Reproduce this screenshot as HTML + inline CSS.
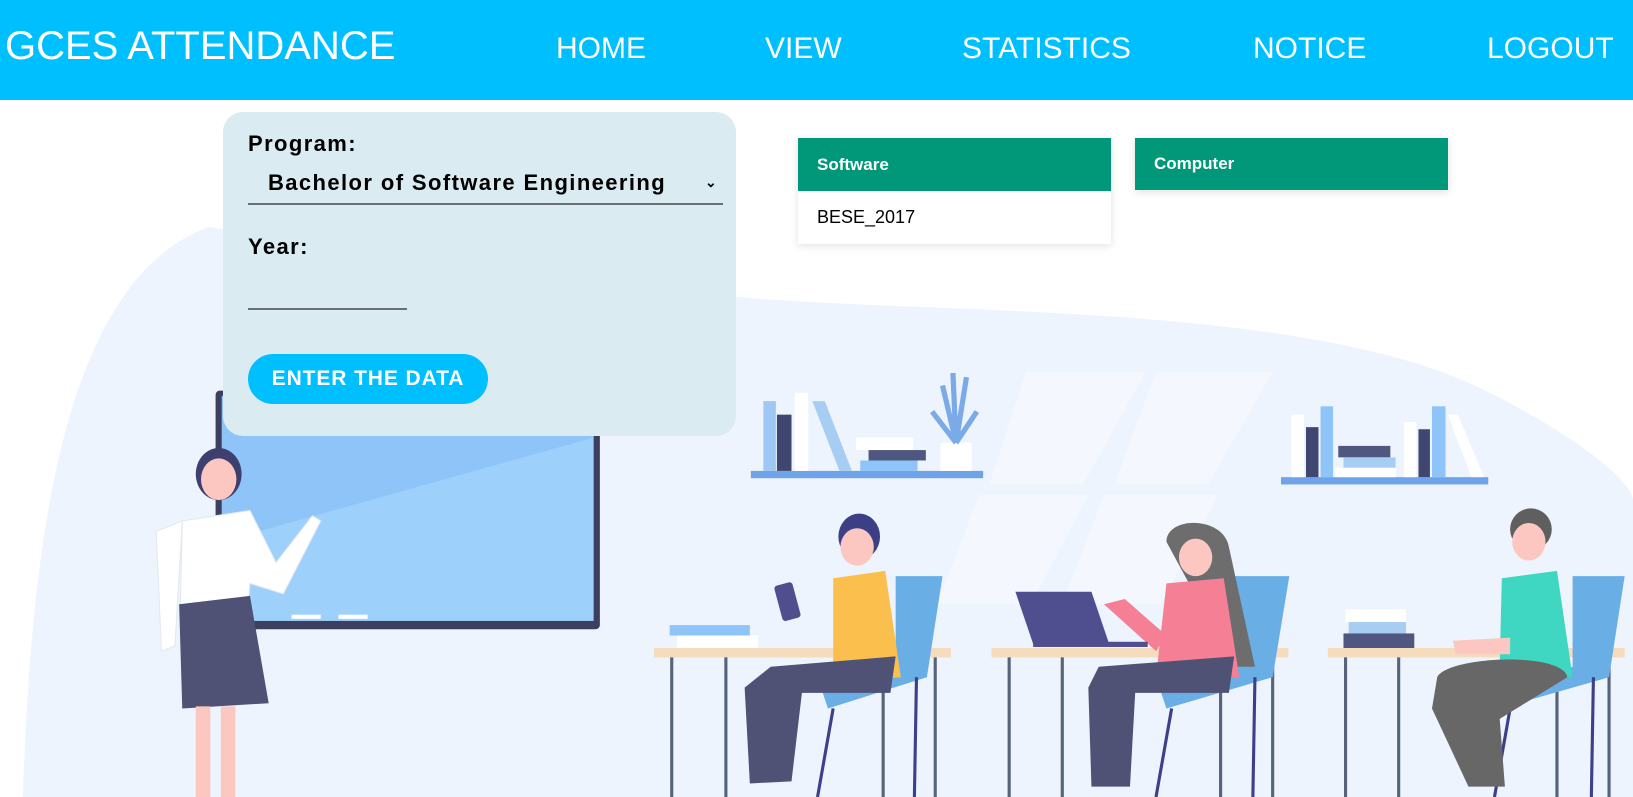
<!DOCTYPE html>
<html><head><meta charset="utf-8"><style>
*{margin:0;padding:0;box-sizing:border-box}
body{width:1633px;height:797px;overflow:hidden;background:#fff;font-family:"Liberation Sans",Arial,sans-serif;position:relative}
#bg{position:absolute;left:0;top:0;width:1633px;height:797px}
.hdr{position:absolute;left:0;top:0;width:1633px;height:100px;background:#00bfff;color:#fff}
.hdr .t{position:absolute;left:5px;top:24px;font-size:40px}
.hdr .n{position:absolute;top:32px;font-size:30px}
.panel{position:absolute;left:223px;top:112px;width:513px;height:324px;background:#dbebf2;border-radius:20px}
.lbl{position:absolute;font-weight:bold;font-size:22px;letter-spacing:1.4px;color:#000}
.card{position:absolute;background:#fff;box-shadow:0 2px 8px rgba(0,0,0,.12)}
.card .h{background:#009879;color:#fff;font-weight:bold;font-size:17px;height:53px;line-height:53px;padding-left:19px}
</style></head><body>
<svg id="bg" viewBox="0 0 1568 765" preserveAspectRatio="none">
<path d="M22 765 C30 520 60 270 200 218 L707 285 C900 302 1250 290 1420 372 C1500 410 1568 460 1568 480 L1568 765 Z" fill="#edf4fd"/>
<polygon points="985,357 1100,357 1040,465 950,465" fill="#f4f8fe"/>
<polygon points="1110,357 1222,357 1160,465 1070,465" fill="#f4f8fe"/>
<polygon points="940,475 1045,475 990,580 900,580" fill="#f4f8fe"/>
<polygon points="1060,475 1170,475 1115,580 1020,580" fill="#f4f8fe"/>
<rect x="207" y="375" width="369" height="229" rx="4" fill="#3e3f5e"/>
<rect x="213" y="380" width="357" height="216" fill="#9dd1fc"/>
<polygon points="213,380 570,380 570,420 213,520" fill="#8ec4f8"/>
<rect x="280" y="590" width="28" height="4" fill="#fff"/><rect x="325" y="590" width="28" height="4" fill="#fff"/>
<rect x="721" y="452" width="223" height="7" fill="#6ea3ea"/>
<rect x="733" y="385" width="12" height="67" fill="#9ec8f3"/><rect x="746" y="398" width="14" height="54" fill="#3f4770"/>
<rect x="763" y="377" width="13" height="75" fill="#fff"/><polygon points="780,385 792,385 818,452 806,452" fill="#a7cdf3"/>
<rect x="822" y="420" width="55" height="12" fill="#fff"/><rect x="834" y="432" width="55" height="10" fill="#4f5780"/><rect x="826" y="442" width="55" height="10" fill="#8ec4f8"/>
<rect x="903" y="425" width="30" height="27" fill="#fff"/>
<path d="M918 425 L905 370 M918 425 L915 358 M918 425 L928 362 M918 425 L938 395 M918 425 L895 395" stroke="#7aaae8" stroke-width="5" fill="none"/>
<rect x="1230" y="458" width="199" height="7" fill="#6ea3ea"/>
<rect x="1240" y="398" width="12" height="60" fill="#fff"/><rect x="1254" y="410" width="12" height="48" fill="#3f4770"/><rect x="1268" y="390" width="12" height="68" fill="#8ec4f8"/>
<rect x="1285" y="428" width="50" height="11" fill="#4f5780"/><rect x="1290" y="439" width="50" height="10" fill="#a7cdf3"/><rect x="1282" y="449" width="58" height="9" fill="#fff"/>
<rect x="1348" y="405" width="12" height="53" fill="#fff"/><rect x="1362" y="412" width="11" height="46" fill="#3f4770"/><rect x="1375" y="390" width="13" height="68" fill="#8ec4f8"/><polygon points="1390,398 1400,398 1425,458 1413,458" fill="#fff"/>
<ellipse cx="210" cy="455" rx="22" ry="25" fill="#3e3f6e"/>
<ellipse cx="210" cy="460" rx="17" ry="20" fill="#fcc7c0"/>
<path d="M175 500 L240 490 L265 540 L300 495 L308 500 L272 570 L240 560 L238 585 L173 590 Z" fill="#fff" stroke="#e3e8ef"/>
<path d="M172 580 L240 572 L258 675 L175 680 Z" fill="#4f5175"/>
<path d="M150 510 L175 500 L168 620 L155 625 Z" fill="#fff" stroke="#e3e8ef"/>
<rect x="188" y="678" width="14" height="87" fill="#fcc7c0"/><rect x="212" y="678" width="14" height="87" fill="#fcc7c0"/>
<g fill="#f5dcbd"><rect x="628" y="622" width="285" height="9"/><rect x="952" y="622" width="285" height="9"/><rect x="1275" y="622" width="285" height="9"/></g>
<g stroke="#55647a" stroke-width="3">
<path d="M645 631V765M697 631V765M848 631V765M898 631V765M969 631V765M1020 631V765M1172 631V765M1222 631V765M1292 631V765M1343 631V765M1495 631V765M1545 631V765"/></g>
<g fill="#6aaee6"><path d="M860 553 L905 553 L890 650 L795 680 L790 665 L860 640 Z"/><path d="M1185 553 L1238 553 L1222 650 L1120 680 L1115 665 L1185 640 Z"/><path d="M1510 553 L1560 553 L1545 650 L1440 680 L1435 665 L1510 640 Z"/></g>
<g stroke="#3e3f8a" stroke-width="3"><path d="M800 680 L785 765 M880 650 L878 765 M1125 680 L1110 765 M1205 650 L1203 765 M1450 680 L1435 765 M1530 650 L1528 765"/></g>
<ellipse cx="825" cy="515" rx="20" ry="22" fill="#3d3f85"/><ellipse cx="823" cy="525" rx="16" ry="18" fill="#fcc7c0"/>
<path d="M800 555 L850 548 L865 650 L800 655 Z" fill="#fbbf4e"/>
<path d="M740 640 L860 630 L855 665 L770 665 L760 750 L720 752 L715 660 Z" fill="#4f5175"/>
<rect x="747" y="560" width="18" height="35" rx="3" fill="#4f4e8e" transform="rotate(-15 756 577)"/>
<rect x="643" y="600" width="77" height="10" fill="#8ec4f8"/><rect x="650" y="610" width="78" height="12" fill="#fff"/>
<path d="M1120 520 C1120 495 1175 495 1180 525 L1205 640 L1185 640 Z" fill="#6d6d6d"/><ellipse cx="1148" cy="535" rx="16" ry="18" fill="#fcc7c0"/>
<path d="M1120 560 L1175 555 L1190 650 L1110 650 Z" fill="#f57f95"/>
<path d="M1060 580 L1080 575 L1120 610 L1110 625 Z" fill="#f57f95"/>
<path d="M1055 640 L1185 630 L1180 665 L1090 665 L1085 755 L1048 755 L1045 660 Z" fill="#4f5175"/>
<polygon points="975,568 1048,568 1065,618 992,618" fill="#4f4e8e"/><rect x="992" y="616" width="110" height="5" fill="#4f4e8e"/>
<ellipse cx="1470" cy="508" rx="20" ry="20" fill="#5f5f5f"/><ellipse cx="1468" cy="520" rx="16" ry="18" fill="#fcc7c0"/>
<path d="M1442 555 L1495 548 L1510 650 L1440 640 Z" fill="#3fd6c2"/>
<path d="M1395 615 L1450 612 L1450 628 L1398 628 Z" fill="#fcc7c0"/>
<path d="M1380 650 C1390 630 1500 625 1505 650 L1440 690 L1445 755 L1410 755 L1375 680 Z" fill="#676767"/>
<rect x="1292" y="585" width="58" height="12" fill="#fff"/><rect x="1295" y="597" width="55" height="11" fill="#a7cdf3"/><rect x="1290" y="608" width="68" height="14" fill="#4f5780"/>
</svg>
<div class="hdr"><div class="t">GCES ATTENDANCE</div>
<div class="n" style="left:556px">HOME</div><div class="n" style="left:765px">VIEW</div><div class="n" style="left:962px">STATISTICS</div><div class="n" style="left:1253px">NOTICE</div><div class="n" style="left:1487px">LOGOUT</div></div>
<div class="panel"></div>
<div class="lbl" style="left:248px;top:131px">Program:</div>
<div class="lbl" style="left:268px;top:170px">Bachelor of Software Engineering</div>
<div style="position:absolute;left:705px;top:174px;font-size:14px;font-weight:bold">&#8964;</div>
<div style="position:absolute;left:248px;top:203px;width:475px;height:2px;background:#6b6e75"></div>
<div class="lbl" style="left:248px;top:234px">Year:</div>
<div style="position:absolute;left:248px;top:308px;width:159px;height:2px;background:#6b6e75"></div>
<div style="position:absolute;left:248px;top:354px;width:240px;height:50px;border-radius:25px;background:#00bfff;color:#fff;font-weight:bold;font-size:21px;letter-spacing:0.9px;line-height:50px;text-align:center">ENTER THE DATA</div>
<div class="card" style="left:798px;top:138px;width:313px;height:106px"><div class="h">Software</div><div style="font-size:18px;padding:16px 0 0 19px">BESE_2017</div></div>
<div class="card" style="left:1135px;top:138px;width:313px;height:52px"><div class="h" style="height:52px;line-height:52px">Computer</div></div>
</body></html>
